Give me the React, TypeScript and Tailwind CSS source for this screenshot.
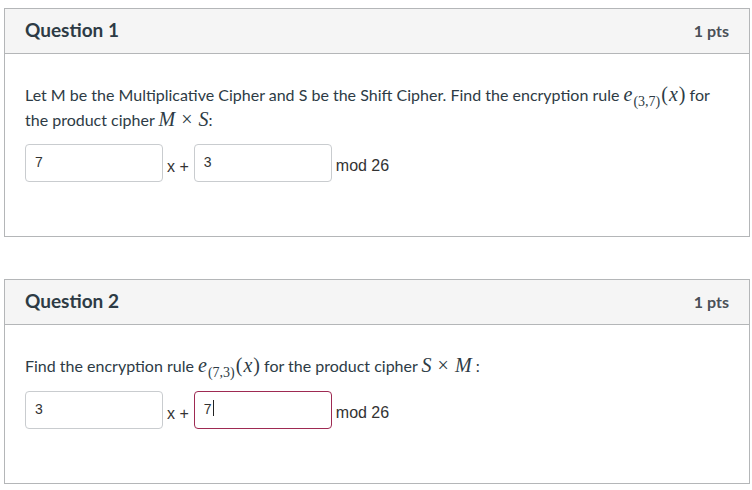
import React from "react";

function Sub({ children }: { children: React.ReactNode }) {
  return (
    <span className="relative top-[5px] ml-[1px] text-[14px] not-italic leading-none">{children}</span>
  );
}

function Rule({ sub }: { sub: string }) {
  return (
    <span className="font-['Liberation_Serif',serif] text-[20px] leading-none">
      <span className="italic">e</span>
      <Sub>{sub}</Sub>
      <span className="ml-[1px]">(</span>
      <span className="italic mx-[1px]">x</span>
      <span>)</span>
    </span>
  );
}

function Product({ a, b }: { a: string; b: string }) {
  return (
    <span className="font-['Liberation_Serif',serif] text-[20px] leading-none">
      <span className="italic">{a}</span>
      <span className="mx-[6px]">×</span>
      <span className="italic">{b}</span>
    </span>
  );
}

function Box({ value, active = false }: { value: string; active?: boolean }) {
  return (
    <div
      className={
        "w-[138px] h-[38px] rounded-[4px] border bg-white px-[9px] pt-[7px] text-[14px] text-[#333] font-['Liberation_Sans',Arial,sans-serif] flex items-start " +
        (active ? "border-[#9e2a52]" : "border-[#c9cccf]")
      }
    >
      <span>{value}</span>
      {active && <span className="ml-[1px] mt-[1px] w-[1px] h-[16px] bg-[#222]" />}
    </div>
  );
}

function Answer({ a, b, activeB = false }: { a: string; b: string; activeB?: boolean }) {
  return (
    <div className="flex items-center font-['Liberation_Sans',Arial,sans-serif] text-[16px] text-[#333]">
      <Box value={a} />
      <span className="ml-[4px] mr-[5px] pt-[8px]">x +</span>
      <Box value={b} active={activeB} />
      <span className="ml-[4px] pt-[6px]">mod 26</span>
    </div>
  );
}

function Question({
  title,
  children,
}: {
  title: string;
  children: React.ReactNode;
}) {
  return (
    <div className="w-[746px] border border-[#b4b6b8] bg-white">
      <div className="h-[45px] bg-[#f5f5f5] border-b border-[#b4b6b8] flex items-center justify-between px-[20px]">
        <span className="text-[19px] font-bold text-[#2d3b45] -mt-[2px]">{title}</span>
        <span className="text-[16px] font-bold text-[#4a5057]">1 pts</span>
      </div>
      <div className="px-[20px] pt-[28px] pb-[54px]">{children}</div>
    </div>
  );
}

export default function App() {
  return (
    <div className="min-h-[490px] bg-white pl-[4px] pt-[8px] font-['Lato','Noto_Sans',sans-serif] text-[#2d3b45]">
      <Question title="Question 1">
        <p className="text-[16px] leading-[25px]">
          Let M be the Multiplicative Cipher and S be the Shift Cipher. Find the encryption rule{" "}
          <Rule sub="(3,7)" /> for the product cipher <Product a="M" b="S" />:
        </p>
        <div className="mt-[12px]">
          <Answer a="7" b="3" />
        </div>
      </Question>
      <div className="h-[42px]" />
      <Question title="Question 2">
        <p className="text-[16px] leading-[25px]">
          Find the encryption rule <Rule sub="(7,3)" /> for the product cipher{" "}
          <Product a="S" b="M" /> :
        </p>
        <div className="mt-[13px]">
          <Answer a="3" b="7" activeB />
        </div>
      </Question>
    </div>
  );
}
